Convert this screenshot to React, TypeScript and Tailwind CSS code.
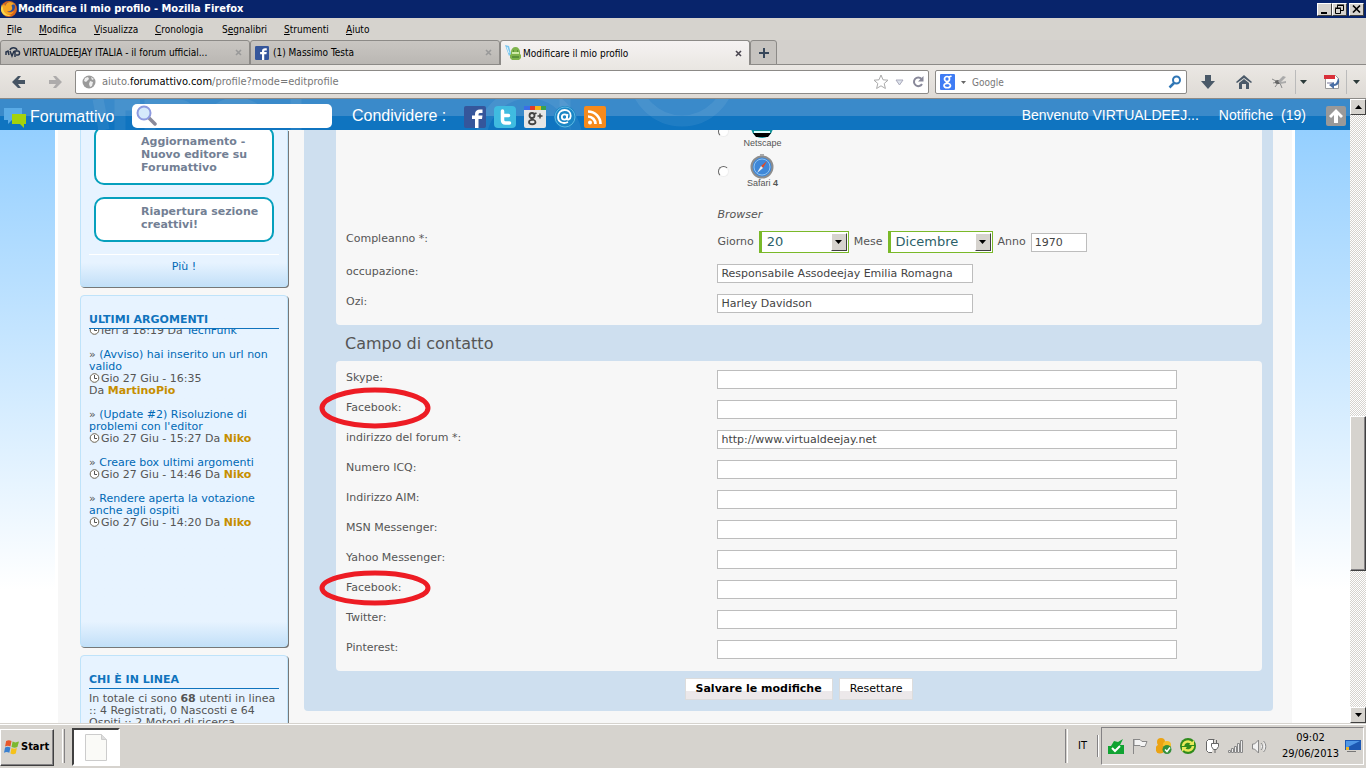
import type { ReactNode } from "react";

const tahoma = "font-['DejaVu_Sans_Condensed','DejaVu_Sans',sans-serif]";
const raised =
  "border border-t-white border-l-white border-r-[#404040] border-b-[#404040] bg-[#d6d3ce]";

function Triangle({ up = false, className = "fill-black" }: { up?: boolean; className?: string }) {
  return (
    <svg width="7" height="4" viewBox="0 0 7 4" className={className} aria-hidden="true">
      <path d={up ? "M0 4L3.5 0L7 4Z" : "M0 0H7L3.5 4Z"} />
    </svg>
  );
}

function FirefoxIcon() {
  return (
    <svg width="18" height="18" viewBox="0 0 18 18" aria-hidden="true">
      <circle cx="9" cy="9" r="8" fill="#d9661a" />
      <circle cx="10" cy="7" r="5" fill="#2a4f9c" />
      <path d="M7 3c3-2 6-1 8 2-3-1-4 0-3 2 1 3-2 5-5 4 1 2 5 2 7 0-1 4-7 5-10 2C1 10 2 6 4 4l1 2z" fill="#f5a623" />
      <path d="M2 4L3 8c0 5 5 8 9 7-5 3-12-1-11-7z" fill="#f9d84a" />
    </svg>
  );
}

function TitleBar() {
  const btn = `flex h-[13px] w-[15px] items-center justify-center ${raised}`;
  return (
    <header className="flex h-[18px] shrink-0 items-center bg-[#08246b] pr-0.5">
      <FirefoxIcon />
      <h1 className="grow text-[11px] font-bold text-white">Modificare il mio profilo - Mozilla Firefox</h1>
      <button className={btn} aria-label="Riduci a icona">
        <svg width="11" height="10"><path d="M2 8h6v2H2z" /></svg>
      </button>
      <button className={btn} aria-label="Ripristina">
        <svg width="11" height="10" fill="none" stroke="#000">
          <path d="M3.5 4V1.5h6v5H7M3 1h7M1.5 4.500h5v5h-5zM1 4h6" />
        </svg>
      </button>
      <button className={`ml-0.5 ${btn}`} aria-label="Chiudi">
        <svg width="11" height="10" stroke="#000" strokeWidth="1.7"><path d="M2 1.500l7 7M9 1.500l-7 7" /></svg>
      </button>
    </header>
  );
}

const menus = [
  ["", "F", "ile", "w-8"],
  ["", "M", "odifica", "w-[55px]"],
  ["", "V", "isualizza", "w-[61px]"],
  ["", "C", "ronologia", "w-[67px]"],
  ["S", "e", "gnalibri", "w-[62px]"],
  ["", "S", "trumenti", "w-[62px]"],
  ["", "A", "iuto", "w-10"],
];

function MenuBar() {
  return (
    <nav className="flex h-[22px] shrink-0 items-center bg-[#d6d3ce] pl-[7px] text-[10px]">
      {menus.map(([a, u, b, w]) => (
        <button key={u + b} className={`${w} text-left whitespace-nowrap`}>
          {a}<u>{u}</u>{b}
        </button>
      ))}
    </nav>
  );
}

function CloseX({ active = false }: { active?: boolean }) {
  return (
    <button aria-label="Chiudi scheda" className="flex h-4 w-4 shrink-0 items-center justify-center">
      <svg width="7" height="7" stroke={active ? "#4a4650" : "#999"} strokeWidth="1.6"><path d="M1 1l5 5M6 1L1 6" /></svg>
    </button>
  );
}

function Tab({ icon, title, active = false }: { icon: ReactNode; title: string; active?: boolean }) {
  return (
    <div
      className={`flex w-[250px] items-center gap-0.5 rounded-t-[3px] border border-[#8c8a87] pr-[3px] pl-1 ${
        active ? "border-b-0 bg-linear-to-b from-[#f5f2f2] to-[#ebe8e4]" : "bg-linear-to-b from-[#c9c6c2] to-[#bab7b3]"
      }`}
    >
      {icon}
      <span className="grow truncate text-[10px]">{title}</span>
      <CloseX active={active} />
    </div>
  );
}

function FacebookTile({ size }: { size: number }) {
  return (
    <svg width={size} height={size} viewBox="0 0 22 22" aria-hidden="true">
      <rect width="22" height="22" rx="2" fill="#35569b" />
      <path d="M11 22V13H8V9.500h3V8c0-3 2-4.500 5-4.500h2.500V7H16.500c-1.500 0-2 .5-2 1.500v1h4l-.5 3.500h-3.500v9z" fill="#fff" />
    </svg>
  );
}

function TabStrip() {
  return (
    <div className="flex h-[25px] shrink-0 bg-[#d3d0cc] shadow-[inset_0_-1px_0_#8c8a87]">
      <Tab
        title="VIRTUALDEEJAY ITALIA - il forum ufficial..."
        icon={
          <svg width="16" height="12" viewBox="0 0 16 12" fill="none" stroke="#26334a" strokeWidth="1.500" className="shrink-0">
            <path d="M1 8V5l2-1 1 4M5 3c1-3 6-3 7 0M5 4l2 5 2-5M10 10V4h3c2 0 2 4 0 4h-2" />
          </svg>
        }
      />
      <Tab title="(1) Massimo Testa" icon={<span className="mr-0.5 shrink-0"><FacebookTile size={14} /></span>} />
      <Tab
        active
        title="Modificare il mio profilo"
        icon={
          <svg width="16" height="16" viewBox="0 0 16 16" className="shrink-0">
            <path d="M0 0l4 1 2 8-2 2z" fill="#7cc6ee" /><path d="M2 2l2 6" stroke="#d8f0fc" />
            <path d="M6 7c0-3 2-5 4.500-5S15 4 15 7v2l1 1v3l-2 2H7l-2-2v-3l1-1z" fill="#7fb34c" />
            <path d="M7 7h7v2H7z" fill="#d0eaa8" /><path d="M8 6h1M12 6h1M7 12h7" stroke="#38702a" />
          </svg>
        }
      />
      <button aria-label="Nuova scheda" className="flex w-[27px] items-center justify-center rounded-t-[3px] border border-[#8c8a87] bg-[#c6c3bf]">
        <svg width="10" height="10" fill="#37475a"><path d="M4 0h2v4h4v2H6v4H4V6H0V4h4z" /></svg>
      </button>
    </div>
  );
}

function NavArrow({ color, flip = false }: { color: string; flip?: boolean }) {
  return (
    <svg width="14" height="12" viewBox="0 0 14 12" fill={color} className={flip ? "rotate-180" : ""}>
      <path d="M0 6L6 0h3L6 4h7v4H6l3 4H6z" />
    </svg>
  );
}

function NavBar() {
  return (
    <div className="flex h-[34px] shrink-0 items-center border-b border-[#8c8a87] bg-linear-to-b from-[#ebe8e4] to-[#dedad5] pt-px text-[10px]">
      <button aria-label="Indietro" className="ml-3 w-[36px]"><NavArrow color="#465463" /></button>
      <button aria-label="Avanti" className="w-[27px]"><NavArrow color="#adabab" flip /></button>
      <div className="flex h-6 grow items-center rounded-xs border border-[#8c8a87] bg-white pr-1 pl-1.5">
        <svg width="14" height="14" viewBox="0 0 14 14" aria-hidden="true">
          <circle cx="7" cy="7" r="6.500" fill="#9a9a9a" />
          <path d="M3 3l3-1 1 2-3 3-2-1zM8 6l3 1-1 4-2 1-1-3zM9 2l3 2-2 1z" fill="#eee" />
        </svg>
        <span className="ml-1.5 grow text-[11px] text-[#777]">
          aiuto.<span className="text-black">forumattivo.com</span>/profile?mode=editprofile
        </span>
        <svg width="16" height="16" viewBox="0 0 16 16" fill="#fff" stroke="#aaa">
          <path d="M8 1l2 4.800 5 .4-3.800 3.300 1.200 5L8 11.800 3.600 14.500l1.200-5L1 6.200l5-.4z" />
        </svg>
        <svg width="9" height="7" className="mx-1.5" fill="#dde3ec" stroke="#aab"><path d="M1 1h7L4.500 6z" /></svg>
        <svg width="12" height="12" viewBox="0 0 12 12" fill="none" stroke="#889" strokeWidth="2" className="ml-0.5">
          <path d="M9.500 3A4.300 4.300 0 1 0 10 8" /><path d="M11.500 0v5.500H6z" fill="#889" stroke="none" />
        </svg>
      </div>
      <div className="ml-1.5 flex h-6 w-[252px] items-center rounded-xs border border-[#8c8a87] bg-white px-1">
        <svg width="15" height="16" viewBox="0 0 15 16" className="shrink-0" aria-hidden="true">
          <rect width="15" height="16" rx="1" fill="#3f7cf4" />
          <g fill="none" stroke="#fff" strokeWidth="1.700"><circle cx="7" cy="5" r="2.500" /><path d="M9 3l2.500-1M6.500 7.500c-1 1.500 4 1.500 4 4 0 3-6.500 3-6.500 0 0-1.500 2-2.500 4-2" /></g>
        </svg>
        <svg width="5" height="3" className="mx-1.5 shrink-0 fill-[#666]"><path d="M0 0h5L2.500 3z" /></svg>
        <input aria-label="Cerca con Google" placeholder="Google" className="w-0 grow outline-none placeholder:text-[#777]" />
        <svg width="14" height="14" viewBox="0 0 14 14" fill="none" stroke="#2f76b5" strokeWidth="2">
          <circle cx="8.500" cy="5" r="3.500" /><path d="M6 8L1.500 12.500" strokeWidth="2.500" />
        </svg>
      </div>
      <div className="ml-3.5 flex items-center">
        <button aria-label="Download" className="w-[35px]">
          <svg width="14" height="14" fill="#4a5968"><path d="M4 0h6v6h4l-7 8-7-8h4z" /></svg>
        </button>
        <button aria-label="Pagina iniziale" className="w-9">
          <svg width="16" height="14" fill="#4a5968"><path d="M8 0l8 7-1 1-7-5-7 5-1-1zM3 8l5-4 5 4v6h-3V9H6v5H3z" /></svg>
        </button>
        <button aria-label="Firebug" className="w-[23px]">
          <svg width="15" height="14" viewBox="0 0 15 14" stroke="#8a8a8a" fill="#666"><path d="M0 4l6 3M3 12l3-4M8 8l2 5M1 8l5-1" /><ellipse cx="6" cy="7" rx="3" ry="2" stroke="none" /><path d="M6 6l5-5 3 1-5 5 5-1v2l-6 1z" fill="#aaa" stroke="none" /></svg>
        </button>
        <span className="flex h-6 w-[29px] items-center border-l border-[#bbb] pl-1"><Triangle className="fill-[#2c3a3a]" /></span>
        <button aria-label="PDF" className="w-[22px]">
          <svg width="17" height="16" viewBox="0 0 17 16"><path d="M1.500 1.500h10l3 3v10h-13z" fill="#fff" stroke="#999" /><path d="M0 1h11v4H0z" fill="#d9303a" /><path d="M3 8h6v2H3z" fill="#bbc" /><path d="M14 4c3 4 0 8-4 8v3L5 11l5-3v2c2 0 3-2 4-6z" fill="#4a6fa5" /></svg>
        </button>
        <span className="flex h-6 w-5 items-center border-l border-[#bbb] pl-1.5"><Triangle className="fill-[#2c3a3a]" /></span>
      </div>
    </div>
  );
}

function ShareIcons() {
  return (
    <div className="flex items-center gap-2">
      <a href="#facebook" aria-label="Facebook"><FacebookTile size={22} /></a>
      <a href="#twitter" aria-label="Twitter">
        <svg width="22" height="22" viewBox="0 0 22 22"><rect width="22" height="22" rx="4" fill="#3fbbe0" /><path d="M8.500 5v9c0 2 1 3 3 3h4M8.500 9.500h6" stroke="#fff" strokeWidth="3.500" fill="none" strokeLinecap="round" /></svg>
      </a>
      <a href="#google" aria-label="Google+">
        <svg width="22" height="22" viewBox="0 0 22 22"><rect width="22" height="22" rx="2" fill="#e6e6e6" /><path d="M0 0h6v4H0z" fill="#3a6ee8" /><path d="M6 0h5v4H6z" fill="#e03a2c" /><path d="M11 0h6v4h-6z" fill="#f5b41a" /><path d="M17 0h5v4h-5z" fill="#3aa14c" /><g fill="none" stroke="#444" strokeWidth="1.800"><circle cx="8" cy="9.500" r="2.500" /><path d="M10 8l2.500-1M7.500 12c-1 1.500 4 1.500 4 4 0 3-6.500 3-6.500 0 0-1.500 2-2.500 4-2" /></g><path d="M13.500 10h5M16 7.500v5" stroke="#444" strokeWidth="1.500" /></svg>
      </a>
      <a href="#email" aria-label="Email">
        <svg width="22" height="24" viewBox="0 0 22 24"><circle cx="11" cy="12" r="11" fill="#1b86c5" /><circle cx="11" cy="12" r="10" fill="none" stroke="#5db5e2" /><g fill="none" stroke="#fff" strokeWidth="1.800"><circle cx="10.500" cy="12" r="2.700" /><path d="M13.500 9l-.8 4.500c0 2 4 1 4-2.500 0-4-3-6-6-6-4 0-6.700 3-6.700 7 0 5 5 7.500 10 5" /></g></svg>
      </a>
      <a href="#rss" aria-label="RSS">
        <svg width="22" height="22" viewBox="0 0 22 22"><rect width="22" height="22" rx="2" fill="#f68a1c" /><circle cx="6" cy="16.500" r="2" fill="#fff" /><path d="M4 10.500a7.500 7.500 0 0 1 7.500 7.500M4 5.500A12.500 12.500 0 0 1 16.500 18" stroke="#fff" strokeWidth="2.700" fill="none" /></svg>
      </a>
    </div>
  );
}

function ForumBar() {
  return (
    <div className="relative flex h-[31px] shrink-0 items-center bg-linear-to-b from-[#3a8aca] from-55% to-[#0f74c0] to-55% font-['Liberation_Sans',sans-serif] text-[16px] text-white">
      <svg className="absolute inset-0 h-full w-full" fill="none" stroke="#fff" strokeOpacity="0.07" strokeWidth="11" aria-hidden="true">
        <path d="M98 0l6 31M120 31V6h20M150 31V6h28c14 0 14 14 0 14h-18M212 22c2-24 46-24 50 0M296 0v31" />
        <circle cx="529" cy="42" r="48" /><path d="M565 0v31" /><circle cx="682" cy="-26" r="48" />
      </svg>
      <a href="#home" className="relative flex w-[132px] items-center gap-1 pt-1 pl-1">
        <svg width="22" height="22" viewBox="0 0 22 22"><path d="M0 2h18v12H8l-4 4v-4H0z" fill="#5aabe6" /><path d="M8 8h14v10h-2v4l-4-4H8z" fill="#a4d20c" /></svg>
        Forumattivo
      </a>
      <label className="relative mt-0.5 flex h-6 w-[200px] items-center rounded-[5px] bg-white pl-1">
        <svg width="21" height="21" viewBox="0 0 21 21"><path d="M12 12l7 7" stroke="#8a8a9a" strokeWidth="3.500" strokeLinecap="round" /><circle cx="8" cy="8" r="6.500" fill="#d5e9fb" stroke="#8d9ae0" strokeWidth="2" /></svg>
        <input aria-label="Cerca" className="w-0 grow text-[13px] text-black outline-none" />
      </label>
      <span className="relative ml-5 w-[112px] pt-0.5">Condividere :</span>
      <div className="relative mt-1 grow"><ShareIcons /></div>
      <a href="#user" className="relative pt-0.5 text-[14px]">Benvenuto VIRTUALDEEJ...</a>
      <a href="#notifiche" className="relative ml-5 pt-0.5 text-[14px] whitespace-pre">Notifiche  (19)</a>
      <button aria-label="Torna su" className="relative mt-0.5 mr-1 ml-5 flex h-5 w-5 items-center justify-center rounded-xs bg-[#999]">
        <svg width="14" height="14" fill="#fff"><path d="M7 0l7 7-2 2-3-3v8H5V6L2 9 0 7z" /></svg>
      </button>
    </div>
  );
}

const cardFrame =
  "border border-[#bfe3fa] bg-[#e7f3ff] shadow-[1px_1px_0_#777] px-2";

function CardTitle({ children }: { children: ReactNode }) {
  return <h2 className="border-b border-[#1073bd] text-[11px] leading-4 font-bold text-[#1073bd]">{children}</h2>;
}

function Clock() {
  return (
    <svg width="11" height="10" viewBox="0 0 11 10" className="mr-px inline align-[-1px]" aria-hidden="true">
      <circle cx="5.500" cy="5" r="4.300" fill="#fff" stroke="#6b6250" /><path d="M5.500 2v3.500H8" stroke="#555" fill="none" />
    </svg>
  );
}

const topics = [
  { title: ["(Avviso) hai inserito un url non", "valido"], time: "16:35", user: "MartinoPio", wrap: true },
  { title: ["(Update #2) Risoluzione di", "problemi con l'editor"], time: "15:27", user: "Niko" },
  { title: ["Creare box ultimi argomenti"], time: "14:46", user: "Niko" },
  { title: ["Rendere aperta la votazione", "anche agli ospiti"], time: "14:20", user: "Niko" },
];

function Sidebar() {
  return (
    <aside className="flex w-[208px] shrink-0 flex-col gap-2 text-[11px] leading-3 text-[#555]">
      <section className={`${cardFrame} h-[157px] rounded-b-[4px] border-t-0 bg-linear-to-b from-[#e7f3ff] from-85% to-[#c3e0f8]`}>
        <div className="mx-[5px] -mt-1 h-[59px] rounded-[10px] border-2 border-[#06a0bd] bg-white pt-[7px] pl-[45px] leading-[13px] font-bold text-[#737f94]">
          <p>Aggiornamento -<br />Nuovo editore su<br />Forumattivo</p>
        </div>
        <div className="mx-[5px] mt-3 h-[45px] rounded-[10px] border-2 border-[#06a0bd] bg-white pt-[6px] pl-[45px] leading-[13px] font-bold whitespace-nowrap text-[#737f94]">
          <p>Riapertura sezione<br />creattivi!</p>
        </div>
        <a href="#altro" className="mt-3 block border-t border-white pt-1.5 text-center text-[#0069b5]">Più !</a>
      </section>

      <section className={`${cardFrame} h-[352px] rounded-[4px] bg-linear-to-b from-[#e7f3ff] from-93% to-[#c3e0f8] pt-4`}>
        <CardTitle>ULTIMI ARGOMENTI</CardTitle>
        <div className="h-3 overflow-hidden">
          <p className="-mt-1 whitespace-nowrap"><Clock />Ieri a 18:19 Da <span className="text-[#0069b5]">TechFunk</span></p>
        </div>
        <ul className="mt-2 flex flex-col gap-3">
          {topics.map((t) => (
            <li key={t.title[0]} className="whitespace-nowrap">
              » <a href="#topic" className="text-[#0069b5]">{t.title[0]}{t.title[1] && <><br />{t.title[1]}</>}</a>
              <br />
              <Clock />Gio 27 Giu - {t.time}{t.wrap ? <br /> : " "}Da <b className="text-[#c68e00]">{t.user}</b>
            </li>
          ))}
        </ul>
      </section>

      <section className={`${cardFrame} h-[120px] shrink-0 rounded-t-[4px] pt-4`}>
        <CardTitle>CHI È IN LINEA</CardTitle>
        <p className="mt-1 whitespace-nowrap">
          In totale ci sono <b>68</b> utenti in linea<br />:: 4 Registrati, 0 Nascosti e 64<br />Ospiti :: 2 Motori di ricerca
        </p>
      </section>
    </aside>
  );
}

const inputStyle = "h-[19px] border border-[#bdbdbd] bg-white px-[3px] text-[11px] text-[#444] outline-none";

type RowProps = { label: string; id: string; value?: string; wide?: boolean; circle?: number };

function Row({ label, id, value = "", wide = false, circle }: RowProps) {
  return (
    <div className="grid h-[30px] grid-cols-[41%_1fr] items-start">
      <label htmlFor={id} className="relative leading-[22px]">
        {label}
        {circle && (
          <svg className="absolute -top-2.5 -left-[27px]" width="112" height="42" viewBox="0 0 112 42" fill="none" aria-hidden="true">
            <ellipse cx="56" cy="21" rx="53" ry={circle} stroke="#ed1c24" strokeWidth="5" />
          </svg>
        )}
      </label>
      <input id={id} defaultValue={value} className={`mt-[3px] max-w-full ${inputStyle} ${wide ? "w-[460px]" : "w-64"}`} />
    </div>
  );
}

function Dropdown({ id, value, width }: { id: string; value: string; width: string }) {
  return (
    <span className={`relative flex h-[22px] ${width}`}>
      <select id={id} defaultValue={value} className="w-full appearance-none border border-l-3 border-[#7ab929] bg-white pl-[5px] text-[13px] text-[#2c5f69] outline-none">
        <option>{value}</option>
      </select>
      <span className={`pointer-events-none absolute top-0.5 right-0.5 flex h-[18px] w-4 items-center justify-center ${raised}`}><Triangle /></span>
    </span>
  );
}

function BrowserOption({ name, children }: { name: ReactNode; children: ReactNode }) {
  return (
    <label className="flex h-10 items-start">
      <input type="radio" name="browser" className="mt-4 ml-px h-[11px] w-[11px] shrink-0 appearance-none rounded-full border border-[#eee] border-t-[#666] border-l-[#666] bg-white" />
      <span className="ml-3.5 flex w-[38px] flex-col items-center pt-[3px] font-['Liberation_Sans',sans-serif] text-[9px] leading-2">
        <svg width="26" height="26" viewBox="0 0 26 26" aria-hidden="true">{children}</svg>
        <span className="whitespace-nowrap">{name}</span>
      </span>
    </label>
  );
}

const contacts = [
  { label: "Skype:" },
  { label: "Facebook:", circle: 18 },
  { label: "indirizzo del forum *:", value: "http://www.virtualdeejay.net" },
  { label: "Numero ICQ:" },
  { label: "Indirizzo AIM:" },
  { label: "MSN Messenger:" },
  { label: "Yahoo Messenger:" },
  { label: "Facebook:", circle: 15 },
  { label: "Twitter:" },
  { label: "Pinterest:" },
];

function ProfileForm() {
  const btn = "h-[22px] border border-[#dcdcdc] bg-linear-to-b from-white from-60% to-[#ece8ea] to-60% px-2.5 text-black";
  return (
    <form className="grow self-start rounded-b-[4px] bg-[#cedfef] pr-[11px] pb-[11px] pl-8 text-[11px] text-[#555]" onSubmit={(e) => e.preventDefault()}>
      <section className="rounded-b-[4px] bg-[#f7f7f7] px-2.5 pb-1">
        <div className="grid h-[98px] grid-cols-[41%_1fr] overflow-hidden">
          <div className="col-start-2 -mt-5 flex flex-col">
            <BrowserOption name="Netscape">
              <circle cx="13" cy="14" r="11" fill="#11939c" /><path d="M4 20h18l-3 4H7z" fill="#000" /><path d="M5 19h16" stroke="#dff" strokeWidth="2" />
            </BrowserOption>
            <BrowserOption name={<>Safari <b>4</b></>}>
              <circle cx="13" cy="14" r="10.500" fill="#3f87d8" stroke="#8d8d8d" strokeWidth="2" /><circle cx="13" cy="14" r="8" fill="none" stroke="#8dc3f2" /><path d="M18 8l-4 7-2-2z" fill="#e44a23" /><path d="M8 20l4-7 2 2z" fill="#eee" /><path d="M11 1h4v2h-4z" fill="#aaa" />
            </BrowserOption>
            <i className="mt-3.5 leading-[22px]">Browser</i>
          </div>
        </div>
        <div className="grid h-[33px] grid-cols-[41%_1fr] items-start">
          <span className="leading-[22px]">Compleanno *:</span>
          <div className="mt-[3px] flex items-center gap-x-[5px]">
            <label htmlFor="giorno">Giorno</label>
            <Dropdown id="giorno" value="20" width="w-[90px]" />
            <label htmlFor="mese">Mese</label>
            <Dropdown id="mese" value="Dicembre" width="w-[105px]" />
            <label htmlFor="anno">Anno</label>
            <input id="anno" defaultValue="1970" className={`w-14 ${inputStyle}`} />
          </div>
        </div>
        <Row id="occupazione" label="occupazione:" value="Responsabile Assodeejay Emilia Romagna" />
        <Row id="ozi" label="Ozi:" value="Harley Davidson" />
      </section>
      <h2 className="h-9 pl-[9px] text-[16px] leading-[38px]">Campo di contatto</h2>
      <section className="rounded-[4px] bg-[#f7f7f7] px-2.5 pt-1.5 pb-1">
        {contacts.map((c, i) => (
          <Row key={i} id={`contatto-${i}`} label={c.label} value={c.value} circle={c.circle} wide />
        ))}
      </section>
      <div className="mt-[7px] flex justify-center gap-1.5">
        <button type="submit" className={`${btn} font-bold`}>Salvare le modifiche</button>
        <button type="reset" className={btn}>Resettare</button>
      </div>
    </form>
  );
}

function Scrollbar() {
  const cap = `flex h-4 shrink-0 items-center justify-center ${raised}`;
  return (
    <div className="flex w-4 shrink-0 flex-col bg-[repeating-conic-gradient(#ffffff_0_25%,#d6d3ce_0_50%)] bg-[length:2px_2px]">
      <button aria-label="Scorri su" className={cap}><Triangle up /></button>
      <div className="grow-[302]" />
      <div className={`grow-[154] shadow-[inset_-1px_-1px_0_#848284] ${raised}`} />
      <div className="grow-[136]" />
      <button aria-label="Scorri giù" className={cap}><Triangle /></button>
    </div>
  );
}

function TrayIcons() {
  return (
    <div className="flex items-center gap-2" aria-hidden="true">
      <svg width="16" height="16"><path d="M0 8h3l3-5 4 1 5-3-3 6h4v9H0z" fill="#10a332" /><path d="M4 10l3 3 5-5" stroke="#fff" strokeWidth="2" fill="none" /></svg>
      <svg width="16" height="16" fill="#f4f4f4" stroke="#888"><path d="M1.500 1v15M2 1.500h6l2 2h5l-2 5h-4l-1-1H2z" /></svg>
      <svg width="16" height="16"><circle cx="5" cy="4" r="4" fill="#eba313" /><circle cx="11" cy="7" r="4" fill="#f6bf2a" /><circle cx="4" cy="11" r="4.500" fill="#eba313" /><circle cx="11" cy="11.500" r="4.500" fill="#34903c" /><path d="M9 11.500l2 2 3-4" stroke="#fff" strokeWidth="1.500" fill="none" /></svg>
      <svg width="16" height="16"><circle cx="8" cy="8" r="8" fill="#2f8b1c" /><path d="M3 8a5 5 0 0 1 9-2.500M13 8a5 5 0 0 1-9 2.500" stroke="#e8e95a" strokeWidth="2.500" fill="none" /><path d="M9 7h5V2zM7 9H2v5z" fill="#e8e95a" /></svg>
      <svg width="16" height="16" fill="#fff" stroke="#666"><path d="M8 14.500H4.500l-2-2v-9l2-2h6M7.500 5.500h7v3l-2 3h-3l-2-3zM9.500 2v3M12.500 2v3M11 11v4" /></svg>
      <svg width="16" height="16" fill="#eee" stroke="#888"><path d="M.5 12.500h2v2h-2zM3.500 10.500h2v4h-2zM6.500 8.500h2v6h-2zM9.500 5.500h2v9h-2zM12.500 2.500h2v12h-2z" /></svg>
      <svg width="16" height="16" fill="#f2f2f2" stroke="#888"><path d="M.5 6v5h2l4 4V2l-4 4zM9 5c2 2 2 5 0 7M11.500 3c3 3 3 8 0 11" /></svg>
    </div>
  );
}

function Taskbar() {
  return (
    <footer className="flex h-[45px] shrink-0 items-center border-t border-[#d6d3ce] bg-[#d6d3ce] text-[11px] shadow-[inset_0_1px_0_#fff]">
      <button className={`mt-0.5 flex h-[37px] w-[54px] items-center gap-0.5 pl-[3px] font-bold shadow-[inset_-1px_-1px_0_#848284] ${raised}`}>
        <svg width="15" height="15" viewBox="0 0 14 14" className="shrink-0"><path d="M2 1c2-1 3-1 5 0L6 6C4 5 3 5 1 6z" fill="#e8582a" /><path d="M8 1.500c2 1 3 1 6 0l-1.500 5c-2 1-3 1-5.500 0z" fill="#7cb82f" /><path d="M1 7c2-1 3-1 5 0l-1 5c-2-1-3-1-5 0z" fill="#3a80cf" /><path d="M7 7.500c2 1 3 1 5 0l-1 5c-2 1-3 1-5 0z" fill="#f5c21b" /></svg>
        Start
      </button>
      <div className="ml-2 h-[34px] w-[3px] border-r border-l border-r-[#848284] border-l-white" />
      <button aria-label="Documento" className="mt-0.5 ml-[7px] flex h-[38px] w-12 items-center justify-center border-2 border-t-[#404040] border-r-white border-b-white border-l-[#404040] bg-white">
        <svg width="22" height="27" fill="#fafaf7" stroke="#ccc"><path d="M.5.5h16l5 5v21H.5z" /><path d="M16.500.5v5h5" fill="#ddd" /></svg>
      </button>
      <div className="grow" />
      <div className="h-[34px] w-[3px] border-r border-l border-r-white border-l-[#848284]" />
      <span className="mx-2.5">IT</span>
      <div className="h-[22px] w-0.5 border-r border-l border-r-white border-l-[#848284]" />
      <div className="mr-0.5 ml-0.5 flex h-[38px] items-center border border-t-[#848284] border-r-white border-b-white border-l-[#848284] pr-0.5 pl-1.5">
        <TrayIcons />
        <p className="mr-1 ml-3 w-[61px] text-center leading-4">09:02<br />29/06/2013</p>
        <svg width="16" height="14"><path d="M0 1h16v10H0z" fill="#1c58b3" /><path d="M1 2h14L1 9z" fill="#4f97e6" /><path d="M2 12h9v1H2z" fill="#777" /><path d="M1 8h3v3H1z" fill="#e9b62c" /></svg>
      </div>
    </footer>
  );
}

export default function App() {
  return (
    <div className={`flex h-screen flex-col overflow-hidden text-black ${tahoma}`}>
      <TitleBar />
      <MenuBar />
      <TabStrip />
      <NavBar />
      <div className="flex min-h-0 grow">
        <main className="flex min-w-0 grow flex-col overflow-hidden font-['DejaVu_Sans',sans-serif]">
          <ForumBar />
          <div className="min-h-0 grow overflow-hidden bg-linear-to-b from-[#94cfff] to-white to-[460px] px-[55px]">
            <div className="h-full bg-white px-[3px]">
              <div className="flex h-full items-start gap-4 bg-[#f7f7f7] pr-[19px] pl-[22px]">
                <Sidebar />
                <ProfileForm />
              </div>
            </div>
          </div>
        </main>
        <Scrollbar />
      </div>
      <Taskbar />
    </div>
  );
}
